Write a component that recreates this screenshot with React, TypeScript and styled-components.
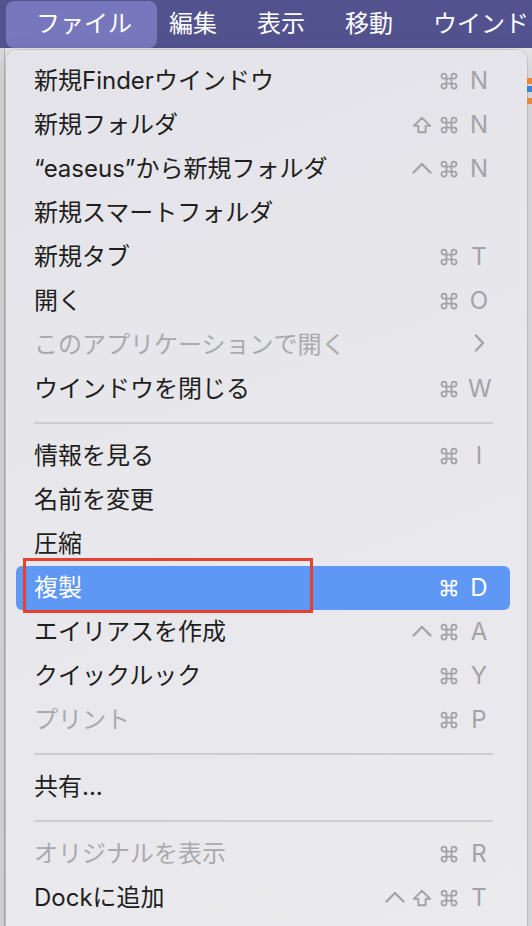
import React from "react";
import styled, { createGlobalStyle, css } from "styled-components";
import { Command } from "lucide-react";

const GlobalStyle = createGlobalStyle`
  html, body { margin: 0; padding: 0; }
  body {
    font-family: "Inter", "Noto Sans CJK JP", sans-serif;
    -webkit-font-smoothing: antialiased;
  }
`;

const Screen = styled.div`
  position: relative;
  width: 532px;
  height: 926px;
  overflow: hidden;
  display: flex;
  flex-direction: column;
  background: linear-gradient(
    to right,
    #dcdcde 0,
    #dcdcde 4px,
    #b4b4b8 4px,
    #b4b4b8 5px,
    #e6e6e8 5px
  );
`;

const BackdropStripe = styled.div<{ $top: number; $color: string }>`
  position: absolute;
  right: 0;
  top: ${(p) => p.$top}px;
  width: 5px;
  height: 6px;
  background: ${(p) => p.$color};
`;

const MenuBar = styled.div`
  display: flex;
  align-items: center;
  height: 48px;
  padding-left: 6px;
  background: #52528f;
  flex-shrink: 0;
`;

const MenuTitle = styled.div<{ $active?: boolean }>`
  display: flex;
  align-items: center;
  height: 47px;
  padding: 0 20px;
  font-size: 24px;
  line-height: 1;
  color: #ffffff;
  white-space: nowrap;
  border-radius: 8px;
  ${(p) =>
    p.$active &&
    css`
      padding: 0 25px 0 30px;
      margin-right: -8px;
      background: #7777bd;
    `}
`;

const Panel = styled.div`
  margin: 2px 5px 0 6px;
  padding: 9px 0 20px;
  border-radius: 11px;
  background: linear-gradient(160deg, #e3e3e9 0%, #e7e7ec 45%, #ebebee 100%);
  box-shadow: 0 0 0 1px rgba(0, 0, 0, 0.1), 0 8px 24px rgba(0, 0, 0, 0.18);
  display: flex;
  flex-direction: column;
`;

const Row = styled.div<{ $highlight?: boolean; $disabled?: boolean }>`
  position: relative;
  display: flex;
  align-items: center;
  height: 44px;
  margin: 0 17px 0 10px;
  padding: 0 20px 0 18px;
  border-radius: 6px;
  font-size: 24px;
  color: ${(p) => (p.$disabled ? "#aaaaae" : "#1e1e20")};
  ${(p) =>
    p.$highlight &&
    css`
      background: #5f97f4;
      color: #ffffff;
    `}
`;

const Label = styled.span`
  flex: 1;
  white-space: nowrap;
  line-height: 44px;
`;

const Shortcut = styled.div<{ $light?: boolean }>`
  display: flex;
  align-items: center;
  gap: 7px;
  color: ${(p) => (p.$light ? "#ffffff" : "#a3a3a7")};
`;

const ModSlot = styled.span`
  display: flex;
  align-items: center;
  justify-content: center;
  width: 20px;
  height: 20px;
`;

const KeyCap = styled.span`
  width: 22px;
  margin-left: 2px;
  text-align: center;
  font-size: 24px;
  line-height: 1;
`;

const Separator = styled.div`
  height: 23px;
  display: flex;
  align-items: center;
  margin: 0 34px 0 28px;
  &::after {
    content: "";
    flex: 1;
    height: 2px;
    background: #cdcdd2;
  }
`;

const Annotation = styled.div`
  position: absolute;
  left: 7px;
  top: -8px;
  width: 290px;
  height: 55px;
  box-sizing: border-box;
  border: 3px solid #e5412c;
  pointer-events: none;
`;

type Mod = "cmd" | "shift" | "ctrl";

type Item =
  | { sep: true }
  | {
      sep?: false;
      label: string;
      mods?: Mod[];
      keyName?: string;
      disabled?: boolean;
      submenu?: boolean;
      highlight?: boolean;
      annotated?: boolean;
    };

const items: Item[] = [
  { label: "新規Finderウインドウ", mods: ["cmd"], keyName: "N" },
  { label: "新規フォルダ", mods: ["shift", "cmd"], keyName: "N" },
  { label: "“easeus”から新規フォルダ", mods: ["ctrl", "cmd"], keyName: "N" },
  { label: "新規スマートフォルダ" },
  { label: "新規タブ", mods: ["cmd"], keyName: "T" },
  { label: "開く", mods: ["cmd"], keyName: "O" },
  { label: "このアプリケーションで開く", disabled: true, submenu: true },
  { label: "ウインドウを閉じる", mods: ["cmd"], keyName: "W" },
  { sep: true },
  { label: "情報を見る", mods: ["cmd"], keyName: "I" },
  { label: "名前を変更" },
  { label: "圧縮" },
  { label: "複製", mods: ["cmd"], keyName: "D", highlight: true, annotated: true },
  { label: "エイリアスを作成", mods: ["ctrl", "cmd"], keyName: "A" },
  { label: "クイックルック", mods: ["cmd"], keyName: "Y" },
  { label: "プリント", mods: ["cmd"], keyName: "P", disabled: true },
  { sep: true },
  { label: "共有..." },
  { sep: true },
  { label: "オリジナルを表示", mods: ["cmd"], keyName: "R", disabled: true },
  { label: "Dockに追加", mods: ["ctrl", "shift", "cmd"], keyName: "T" },
];

const CtrlGlyph = () => (
  <svg width="20" height="20" viewBox="0 0 20 20" fill="none">
    <path d="M1.5 13.5 L10 5 L18.5 13.5" stroke="currentColor" strokeWidth="2.4" strokeLinecap="round" strokeLinejoin="round" />
  </svg>
);

const ShiftGlyph = () => (
  <svg width="22" height="20" viewBox="0 0 22 20" fill="none">
    <path d="M11 2 L20 11 H15 V18 H7 V11 H2 Z" stroke="currentColor" strokeWidth="2.1" strokeLinejoin="round" />
  </svg>
);

const SubmenuGlyph = () => (
  <svg width="20" height="20" viewBox="0 0 20 20" fill="none">
    <path d="M7 2.5 L14 10 L7 17.5" stroke="currentColor" strokeWidth="2.4" strokeLinecap="round" strokeLinejoin="round" />
  </svg>
);

const ModIcon = ({ m }: { m: Mod }) => {
  if (m === "cmd") return <Command size={20} strokeWidth={2.1} />;
  if (m === "shift") return <ShiftGlyph />;
  return <CtrlGlyph />;
};

export default function App() {
  return (
    <>
      <GlobalStyle />
      <Screen>
        <BackdropStripe $top={78} $color="#e8863a" />
        <BackdropStripe $top={86} $color="#3f7fd6" />
        <BackdropStripe $top={98} $color="#e8863a" />
        <MenuBar>
          <MenuTitle $active>ファイル</MenuTitle>
          <MenuTitle>編集</MenuTitle>
          <MenuTitle>表示</MenuTitle>
          <MenuTitle>移動</MenuTitle>
          <MenuTitle>ウインドウ</MenuTitle>
        </MenuBar>
        <Panel>
          {items.map((it, i) => {
            if (it.sep) return <Separator key={i} />;
            return (
              <Row key={i} $highlight={it.highlight} $disabled={it.disabled}>
                <Label>{it.label}</Label>
                {it.submenu && (
                  <Shortcut>
                    <KeyCap>
                      <SubmenuGlyph />
                    </KeyCap>
                  </Shortcut>
                )}
                {it.keyName && (
                  <Shortcut $light={it.highlight}>
                    {it.mods?.map((m) => (
                      <ModSlot key={m}>
                        <ModIcon m={m} />
                      </ModSlot>
                    ))}
                    <KeyCap>{it.keyName}</KeyCap>
                  </Shortcut>
                )}
                {it.annotated && <Annotation />}
              </Row>
            );
          })}
        </Panel>
      </Screen>
    </>
  );
}
